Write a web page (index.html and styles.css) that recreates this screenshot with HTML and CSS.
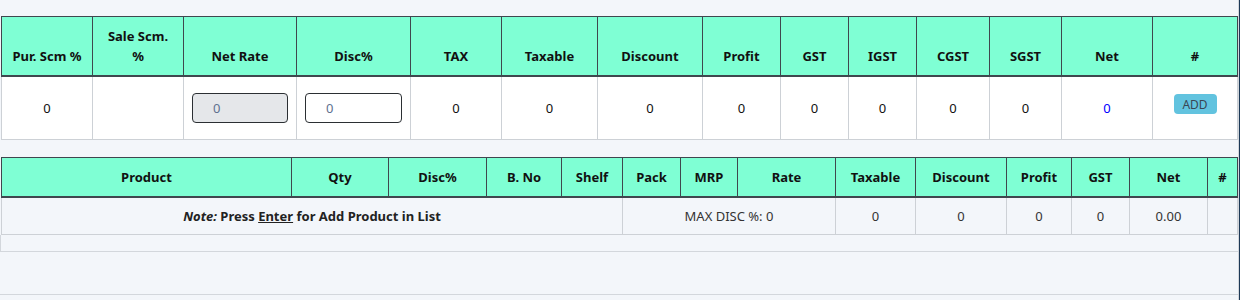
FILE: index.html
```html
<!DOCTYPE html>
<html lang="en">
<head>
    <meta charset="UTF-8">
    <meta name="viewport" content="width=device-width, initial-scale=1.0">
    <title>Purchase Entry</title>
    <link rel="stylesheet" href="styles.css">
</head>
<body>
    <div class="page">
        <div class="content">
            <table class="grid calc-table">
                <thead>
                    <tr>
                        <th>Pur. Scm %</th>
                        <th>Sale Scm. %</th>
                        <th>Net Rate</th>
                        <th>Disc%</th>
                        <th>TAX</th>
                        <th>Taxable</th>
                        <th>Discount</th>
                        <th>Profit</th>
                        <th>GST</th>
                        <th>IGST</th>
                        <th>CGST</th>
                        <th>SGST</th>
                        <th>Net</th>
                        <th>#</th>
                    </tr>
                </thead>
                <tbody>
                    <tr>
                        <td>0</td>
                        <td></td>
                        <td><input class="field" type="text" value="0" readonly></td>
                        <td><input class="field" type="text" value="0"></td>
                        <td>0</td>
                        <td>0</td>
                        <td>0</td>
                        <td>0</td>
                        <td>0</td>
                        <td>0</td>
                        <td>0</td>
                        <td>0</td>
                        <td class="net">0</td>
                        <td><button class="add-btn">ADD</button></td>
                    </tr>
                </tbody>
            </table>

            <table class="grid product-table">
                <thead>
                    <tr>
                        <th>Product</th>
                        <th>Qty</th>
                        <th>Disc%</th>
                        <th>B. No</th>
                        <th>Shelf</th>
                        <th>Pack</th>
                        <th>MRP</th>
                        <th>Rate</th>
                        <th>Taxable</th>
                        <th>Discount</th>
                        <th>Profit</th>
                        <th>GST</th>
                        <th>Net</th>
                        <th>#</th>
                    </tr>
                </thead>
                <tbody>
                    <tr>
                        <td colspan="5" class="note"><em>Note:</em> Press <u>Enter</u> for Add Product in List</td>
                        <td colspan="3">MAX DISC %: 0</td>
                        <td>0</td>
                        <td>0</td>
                        <td>0</td>
                        <td>0</td>
                        <td>0.00</td>
                        <td></td>
                    </tr>
                </tbody>
            </table>

            <div class="list-foot"></div>
            <div class="page-foot"></div>
        </div>
    </div>
</body>
</html>
```

FILE: styles.css
```css
* {
    margin: 0;
    padding: 0;
    box-sizing: border-box;
}

body {
    font-family: "Noto Sans", "Open Sans", sans-serif;
    font-size: 13px;
    color: #222;
    background-color: #f3f6fa;
}

.page {
    width: 1240px;
    height: 300px;
    border-right: 1px solid #1d3957;
    overflow: hidden;
}

.content {
    width: 1239px;
    height: 300px;
    padding-top: 16px;
    border-right: 1px solid #d3d7dc;
}

.grid {
    width: 1236px;
    margin-left: 1px;
    border-collapse: collapse;
    table-layout: fixed;
    text-align: center;
}

.grid th {
    background-color: #7fffd4;
    color: #111;
    font-weight: 700;
    line-height: 20px;
    padding: 9px 8px;
    vertical-align: bottom;
    border: 1px solid #3f474e;
    border-bottom: 2px solid #3f474e;
}

.grid td {
    border: 1px solid #cdd1d6;
    line-height: 20px;
    vertical-align: middle;
}

.calc-table {
    margin-bottom: 17px;
}

.calc-table td {
    background-color: #fff;
    padding: 16px 8px;
    color: #111;
}

.calc-table th:nth-child(1) { width: 91px; }
.calc-table th:nth-child(2) { width: 91px; }
.calc-table th:nth-child(3) { width: 113px; }
.calc-table th:nth-child(4) { width: 114px; }
.calc-table th:nth-child(5) { width: 91px; }
.calc-table th:nth-child(6) { width: 96px; }
.calc-table th:nth-child(7) { width: 105px; }
.calc-table th:nth-child(8) { width: 78px; }
.calc-table th:nth-child(9) { width: 68px; }
.calc-table th:nth-child(10) { width: 68px; }
.calc-table th:nth-child(11) { width: 73px; }
.calc-table th:nth-child(12) { width: 72px; }
.calc-table th:nth-child(13) { width: 91px; }
.calc-table th:nth-child(14) { width: 85px; }

.field {
    display: block;
    width: 100%;
    height: 30px;
    padding: 0 20px;
    font-family: inherit;
    font-size: 13px;
    color: #5f7190;
    background-color: #fff;
    border: 1px solid #2b2f33;
    border-radius: 4px;
    outline: none;
}

.field[readonly] {
    background-color: #e5e7ea;
}

.calc-table .net {
    color: #0000ff;
}

.add-btn {
    display: inline-block;
    width: 43px;
    height: 20px;
    margin-bottom: 8px;
    font-family: inherit;
    font-size: 12px;
    color: #3a4654;
    background-color: #62c3df;
    border: none;
    border-radius: 4px;
    vertical-align: top;
    cursor: pointer;
}

.product-table td {
    padding: 8px;
    color: #333;
}

.product-table .note {
    font-weight: 700;
    color: #222;
}

.product-table th:nth-child(1) { width: 290px; }
.product-table th:nth-child(2) { width: 97px; }
.product-table th:nth-child(3) { width: 98px; }
.product-table th:nth-child(4) { width: 75px; }
.product-table th:nth-child(5) { width: 61px; }
.product-table th:nth-child(6) { width: 58px; }
.product-table th:nth-child(7) { width: 57px; }
.product-table th:nth-child(8) { width: 98px; }
.product-table th:nth-child(9) { width: 80px; }
.product-table th:nth-child(10) { width: 91px; }
.product-table th:nth-child(11) { width: 65px; }
.product-table th:nth-child(12) { width: 58px; }
.product-table th:nth-child(13) { width: 78px; }
.product-table th:nth-child(14) { width: 30px; }

.list-foot {
    height: 17px;
    border-left: 1px solid #d3d7dc;
    border-bottom: 1px solid #d3d7dc;
}

.page-foot {
    margin-top: 42px;
    border-top: 1px solid #d3d7dc;
}
```
